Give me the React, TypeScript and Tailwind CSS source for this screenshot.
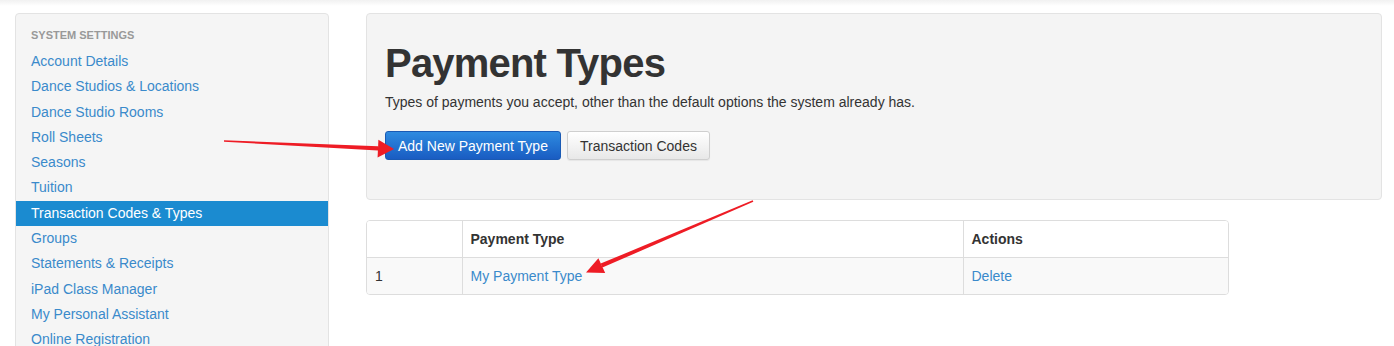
import React from "react";

const navItems = [
  "Account Details",
  "Dance Studios & Locations",
  "Dance Studio Rooms",
  "Roll Sheets",
  "Seasons",
  "Tuition",
  "Transaction Codes & Types",
  "Groups",
  "Statements & Receipts",
  "iPad Class Manager",
  "My Personal Assistant",
  "Online Registration",
];

const active = "Transaction Codes & Types";

function Arrows() {
  return (
    <svg
      className="absolute left-0 top-0 pointer-events-none"
      width={1394}
      height={346}
      viewBox="0 0 1394 346"
    >
      {/* arrow pointing at the Add button */}
      <polygon points="224,140.3 224,141.7 378,150.4 378,146.2" fill="#ee1c25" />
      <polygon points="394,149 378.4,139.8 377.6,157.4" fill="#ee1c25" />
      {/* arrow pointing at the table row */}
      <polygon points="753.3,201.7 752.7,200.3 600.7,263.6 602.4,267.6" fill="#ee1c25" />
      <polygon points="586,272.5 598.4,258.2 605.2,273.0" fill="#ee1c25" />
    </svg>
  );
}

export default function App() {
  return (
    <div
      className="relative w-[1394px] h-[346px] overflow-hidden bg-white bg-[linear-gradient(to_bottom,#f1f1f1,#ffffff_6px)] text-[#333] text-[14px]"
      style={{ fontFamily: '"Liberation Sans", Arial, Helvetica, sans-serif' }}
    >
      <div className="flex items-start gap-[37px] pl-[15px] pr-[12px] pt-[13px]">
        {/* Sidebar */}
        <aside className="w-[314px] shrink-0 bg-[#f5f5f5] border border-[#e3e3e3] rounded-[4px] pt-[11px] pb-[12px]">
          <div className="px-[15px] leading-[20px] text-[11px] font-bold text-[#999] uppercase mb-[4px]">
            System Settings
          </div>
          <ul>
            {navItems.map((item) => (
              <li
                key={item}
                className={
                  item === active
                    ? "px-[15px] leading-[25.3px] bg-[#1b8bd0] text-white"
                    : "px-[15px] leading-[25.3px] text-[#3a8acb]"
                }
              >
                {item}
              </li>
            ))}
          </ul>
        </aside>

        {/* Main */}
        <main className="flex-1">
          <section className="bg-[#f4f4f4] border border-[#e3e3e3] rounded-[4px] px-[18px] pt-[27px] pb-[39px]">
            <h1 className="text-[40px] leading-[44px] font-bold tracking-[-0.8px] text-[#333]">
              Payment Types
            </h1>
            <p className="mt-[7px] leading-[20px]">
              Types of payments you accept, other than the default options the system already has.
            </p>
            <div className="mt-[19px] flex gap-[6px]">
              <button className="h-[29px] px-[12px] rounded-[3px] border border-[#1a5ab4] bg-linear-to-b from-[#2f8be0] to-[#1a5cc2] text-white leading-[20px]">
                Add New Payment Type
              </button>
              <button className="h-[29px] px-[12px] rounded-[3px] border border-[#cfcfcf] bg-linear-to-b from-white to-[#e8e8e8] text-[#333] leading-[20px] shadow-[0_1px_1px_rgba(0,0,0,0.06)]">
                Transaction Codes
              </button>
            </div>
          </section>

          <div className="mt-[20px] w-[863px] border border-[#ddd] rounded-[4px] overflow-hidden">
            <table className="w-full border-collapse leading-[20px]">
              <thead>
                <tr className="bg-white">
                  <th className="w-[95px] p-[8px] text-left font-bold"></th>
                  <th className="w-[501px] p-[8px] text-left font-bold border-l border-[#ddd]">
                    Payment Type
                  </th>
                  <th className="p-[8px] text-left font-bold border-l border-[#ddd]">Actions</th>
                </tr>
              </thead>
              <tbody>
                <tr className="bg-[#f9f9f9] border-t border-[#ddd]">
                  <td className="p-[8px]">1</td>
                  <td className="p-[8px] border-l border-[#ddd] text-[#3a8acb]">My Payment Type</td>
                  <td className="p-[8px] border-l border-[#ddd] text-[#3a8acb]">Delete</td>
                </tr>
              </tbody>
            </table>
          </div>
        </main>
      </div>

      <Arrows />
    </div>
  );
}
